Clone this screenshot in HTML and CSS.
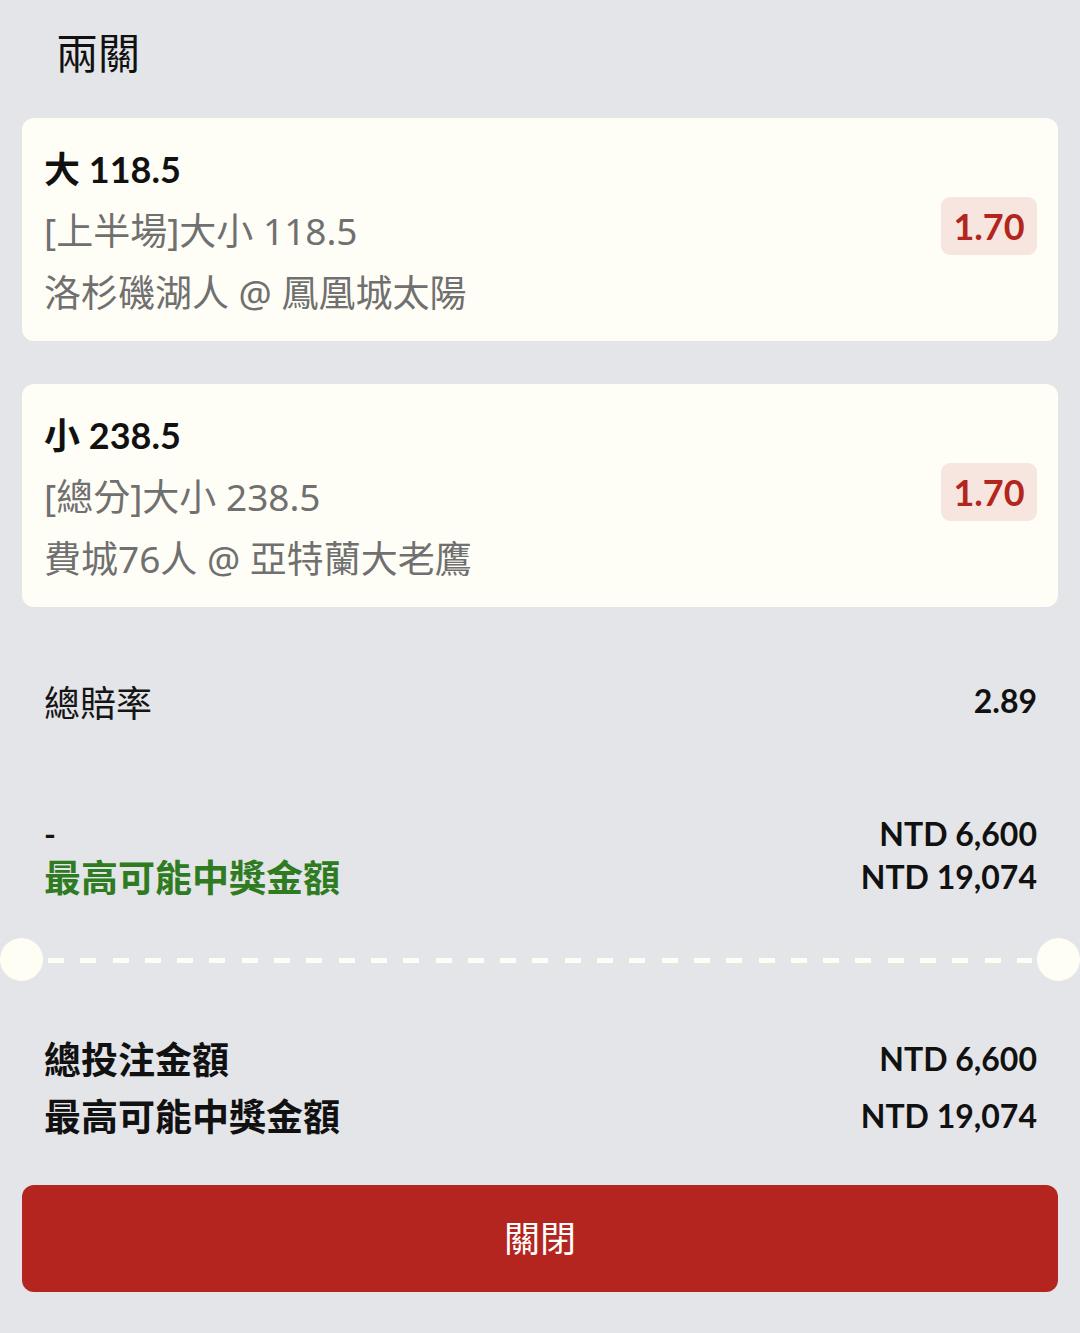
FILE: index.html
```html
<!DOCTYPE html>
<html lang="zh-Hant">
<head>
<meta charset="utf-8">
<title>兩關</title>
<link rel="stylesheet" href="styles.css">
</head>
<body>
<div class="page">
  <h1 class="title">兩關</h1>

  <div class="card">
    <div class="card-info">
      <div class="pick">大 118.5</div>
      <div class="sub">[上半場]大小 118.5</div>
      <div class="sub">洛杉磯湖人 @ 鳳凰城太陽</div>
    </div>
    <div class="odds">1.70</div>
  </div>

  <div class="card card-second">
    <div class="card-info">
      <div class="pick">小 238.5</div>
      <div class="sub">[總分]大小 238.5</div>
      <div class="sub">費城76人 @ 亞特蘭大老鷹</div>
    </div>
    <div class="odds">1.70</div>
  </div>

  <div class="row total-odds">
    <span class="label">總賠率</span>
    <span class="value">2.89</span>
  </div>

  <div class="row stake">
    <div class="col-left">
      <div class="line dash">-</div>
      <div class="line green">最高可能中獎金額</div>
    </div>
    <div class="col-right">
      <div class="line value">NTD 6,600</div>
      <div class="line value">NTD 19,074</div>
    </div>
  </div>

  <div class="separator">
    <span class="notch"></span>
    <span class="dashes"></span>
    <span class="notch"></span>
  </div>

  <div class="totals">
    <div class="row total-line">
      <span class="bold-label">總投注金額</span>
      <span class="value">NTD 6,600</span>
    </div>
    <div class="row total-line">
      <span class="bold-label">最高可能中獎金額</span>
      <span class="value">NTD 19,074</span>
    </div>
  </div>

  <button class="close-btn" type="button">關閉</button>
</div>
</body>
</html>
```
FILE: styles.css
```css
* { box-sizing: border-box; }

html, body {
  margin: 0;
  padding: 0;
}

body {
  background: #e4e5e8;
  font-family: Lato, "Noto Sans CJK TC", sans-serif;
  color: #141414;
  width: 1080px;
  min-height: 1333px;
}

.page {
  padding: 0 22px;
}

.title {
  margin: 21px 0 0 34px;
  font-family: "Noto Sans CJK TC", sans-serif;
  font-weight: 400;
  font-size: 42px;
  line-height: 60px;
  color: #111;
}

.card {
  margin-top: 37px;
  background: #fffef6;
  border-radius: 12px;
  padding: 20px 21px 17px 22px;
  display: flex;
  align-items: center;
  justify-content: space-between;
}

.card-second {
  margin-top: 43px;
}

.card-info {
  display: flex;
  flex-direction: column;
}

.pick {
  font-family: Lato, "Noto Sans CJK TC", sans-serif;
  font-weight: 700;
  font-size: 36px;
  line-height: 62px;
  color: #111;
}

.sub {
  font-family: "Noto Sans", "Noto Sans CJK TC", sans-serif;
  font-weight: 400;
  font-size: 37px;
  line-height: 62px;
  color: #707070;
}

.odds {
  margin-bottom: 11px;
  background: #f7e6df;
  color: #b3261e;
  font-weight: 700;
  font-size: 36px;
  line-height: 58px;
  height: 58px;
  width: 96px;
  text-align: center;
  border-radius: 9px;
}

.row {
  display: flex;
  justify-content: space-between;
  align-items: center;
}

.total-odds {
  margin-top: 72px;
  padding: 0 21px 0 22px;
  line-height: 44px;
}

.label {
  font-family: "Noto Sans CJK TC", sans-serif;
  font-size: 36px;
  color: #151515;
}

.value {
  font-family: Lato, sans-serif;
  font-weight: 700;
  font-size: 32px;
  color: #111;
}

.stake {
  margin-top: 89px;
  padding: 0 21px 0 22px;
  align-items: flex-start;
}

.line {
  line-height: 43px;
}

.col-right {
  text-align: right;
}

.dash {
  font-weight: 700;
  font-size: 32px;
}

.green {
  font-family: "Noto Sans CJK TC", sans-serif;
  font-weight: 700;
  font-size: 37px;
  color: #2f7b21;
}

.separator {
  margin: 39px -22px 0;
  display: flex;
  align-items: center;
  height: 44px;
}

.notch {
  width: 43px;
  height: 43px;
  border-radius: 50%;
  background: #fffef5;
  flex: none;
}

.dashes {
  flex: 1;
  height: 5px;
  margin: 3px 5px 0;
  background-image: repeating-linear-gradient(90deg, #fffef5 0, #fffef5 16px, transparent 16px, transparent 32.3px);
}

.totals {
  margin-top: 49px;
  padding: 0 21px 0 22px;
}

.total-line {
  line-height: 57px;
}

.bold-label {
  font-family: "Noto Sans CJK TC", sans-serif;
  font-weight: 700;
  font-size: 37px;
  color: #111;
}

.close-btn {
  display: block;
  width: 100%;
  height: 107px;
  margin-top: 41px;
  border: none;
  border-radius: 12px;
  background: #b3251e;
  color: #ffffff;
  font-family: "Noto Sans CJK TC", sans-serif;
  font-size: 36px;
  font-weight: 400;
  padding: 0 0 6px;
}
```
